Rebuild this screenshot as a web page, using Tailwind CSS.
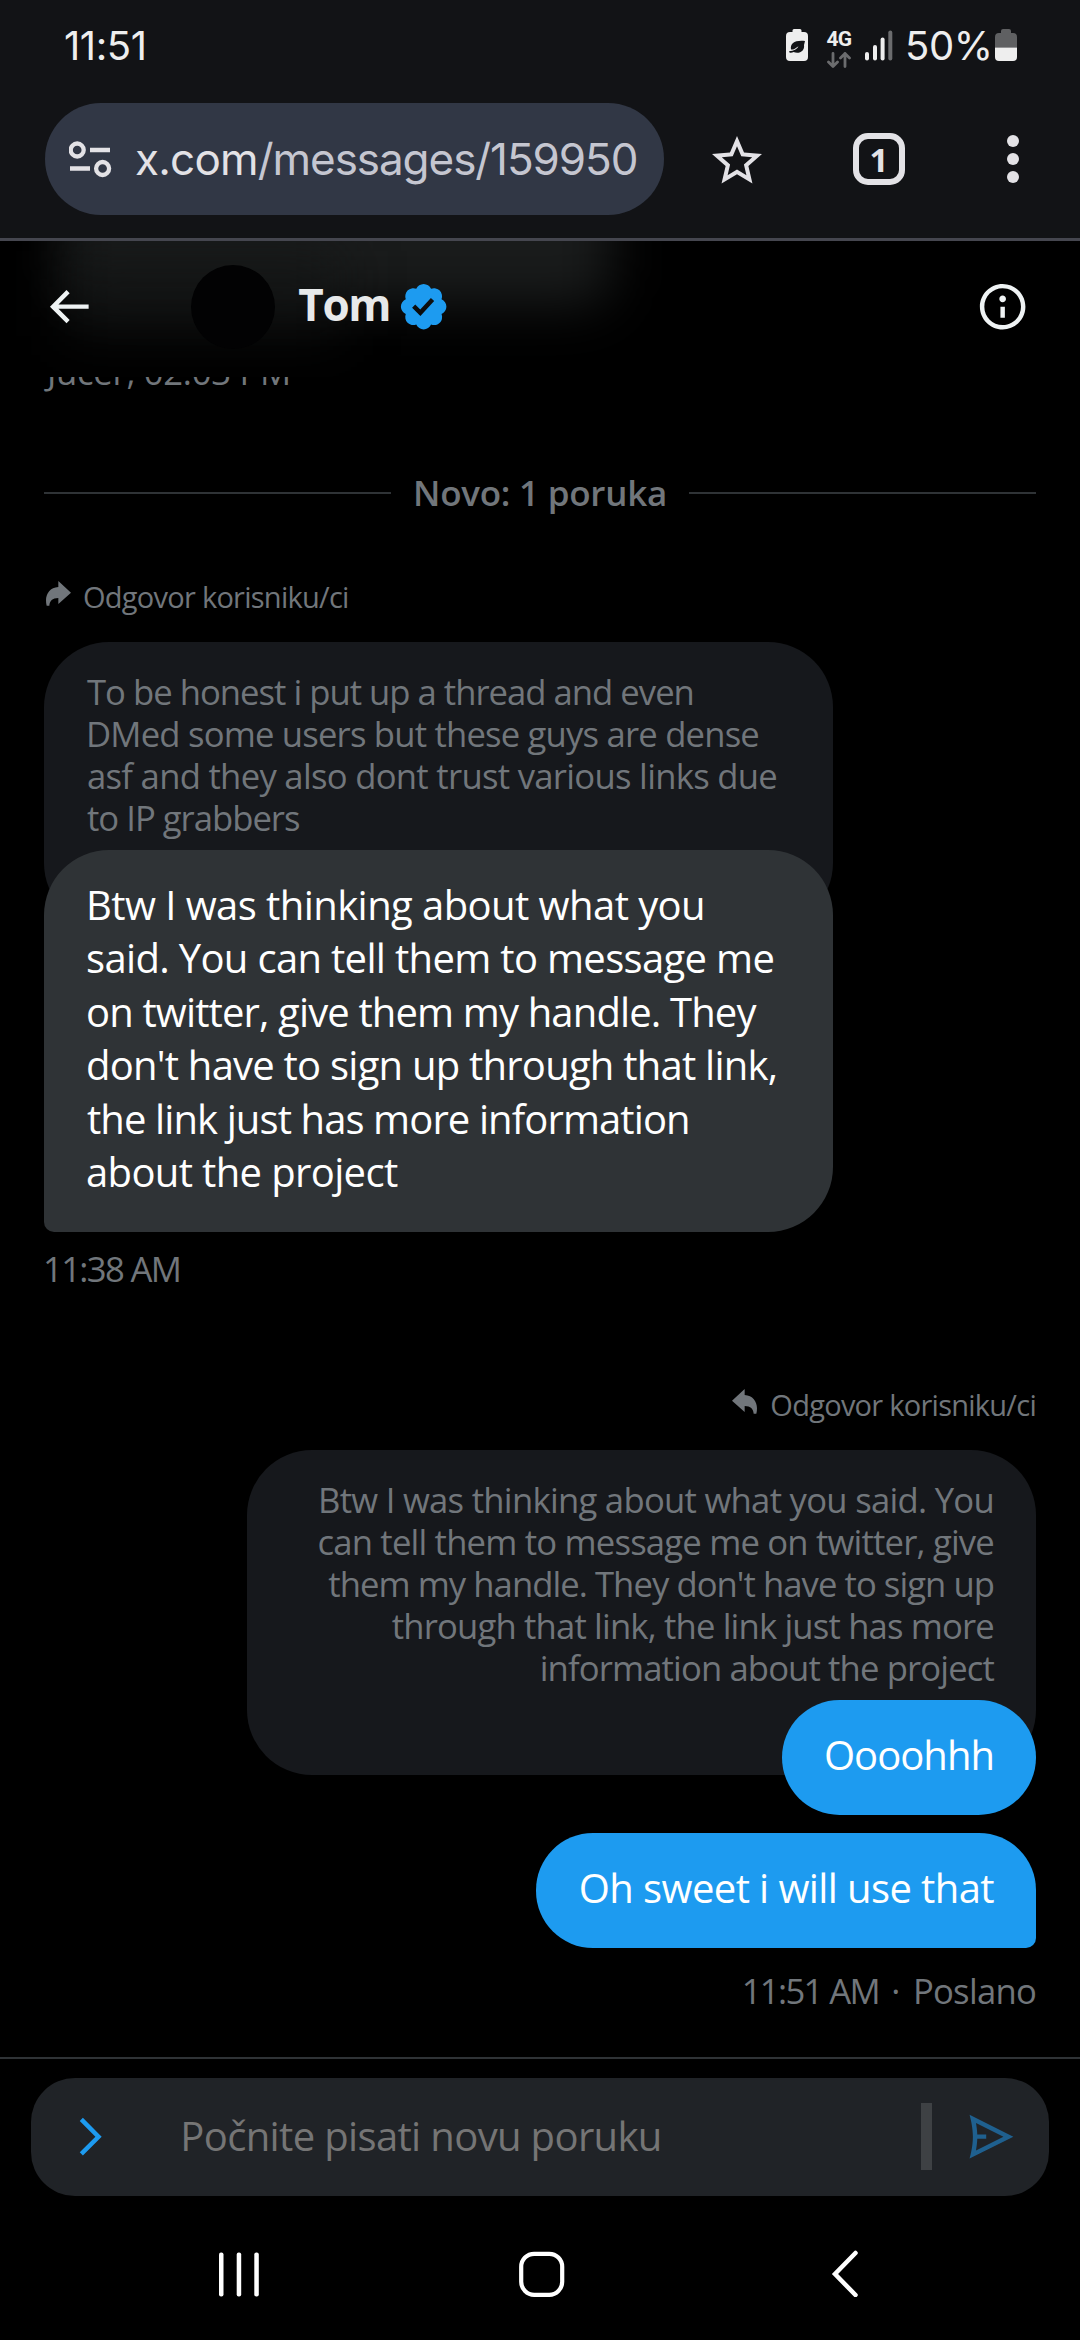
<!DOCTYPE html>
<html lang="hr">
<head>
<meta charset="utf-8">
<title>Tom / X</title>
<script src="https://cdn.jsdelivr.net/npm/@tailwindcss/browser@4"></script>
</head>
<body class="w-[1080px] h-[2340px] bg-black overflow-hidden flex flex-col font-['Open_Sans',sans-serif] text-[#71767b]">

<!-- System status bar and browser toolbar -->
<div class="h-[241px] shrink-0 bg-[#121316] border-b-3 border-[#45464f] font-['Inter',sans-serif]">
  <div class="h-[103px] pl-16 pr-16 pt-[22px] flex items-start justify-between text-[#eeeeee]">
    <span class="text-[40px] leading-[48px] tracking-[-0.4px]">11:51</span>
    <div class="flex items-start">
      <svg class="w-[22px] h-8 mt-[7px]" viewBox="0 0 22 32"><path fill="#eee" d="M6.5 3V1.500Q6.500 0 8 0h6q1.500 0 1.500 1.500V3H18q4 0 4 4v21q0 4-4 4H4q-4 0-4-4V7q0-4 4-4z"/><path fill="#121316" d="M19 12C9 11 4 14 5 20.500 9 21 10 18 12.500 17.500 11 20 8 22 3 22.300L3.500 23.500C5 24 6.500 23.500 7.500 23 13 25.500 19 22 18 16z"/></svg>
      <div class="ml-[17px] mr-px mt-[4px] w-7 flex flex-col items-center">
        <span class="text-[21px] leading-[26px] font-bold tracking-[-0.6px] font-['Roboto',sans-serif]">4G</span>
        <svg class="w-6 h-4" viewBox="0 0 24 16" fill="none" stroke="#6b6c6e" stroke-width="2.800" stroke-linecap="round" stroke-linejoin="round"><path d="M6 1.500v13M1.500 10l4.500 4.500 4.500-4.500M18 14.500v-13M13.500 6 18 1.500 22.500 6"/></svg>
      </div>
      <svg class="w-7 h-8 ml-[11px] mt-[7px]" viewBox="0 0 28 32" fill="#eee"><rect y="23" width="4" height="8.500" rx="2"/><rect x="8" y="16" width="4" height="15.500" rx="2"/><rect x="15.600" y="8.500" width="4" height="23" rx="2"/><rect x="23.300" y="1.500" width="4" height="30" rx="2" fill="#6b6c6e"/></svg>
      <span class="ml-[12px] w-[90px] text-[40px] leading-[48px] tracking-[-0.4px]">50%</span>
      <svg class="w-[22px] h-8 mt-[7px] mr-[-1px]" viewBox="0 0 22 32"><path fill="#5f6062" d="M6 4V2q0-2 2-2h6q2 0 2 2v2h2q4 0 4 4v10.500H0V8q0-4 4-4z"/><path fill="#eee" d="M0 18.500h22V28q0 4-4 4H4q-4 0-4-4z"/></svg>
    </div>
  </div>
  <div class="flex items-center h-28 pl-[45px]">
    <div class="w-[619px] h-28 rounded-full bg-[#313745] flex items-center pl-6 shrink-0">
      <svg class="w-[44px] h-10 shrink-0" viewBox="0 0 44 40" fill="none" stroke="#e3e2e6" stroke-width="4.300"><circle cx="8.200" cy="11" r="6.500"/><path d="M21 11h20M1 29.500h20"/><circle cx="33.600" cy="29.500" r="6.500"/></svg>
      <div class="ml-[22px] w-[506px] overflow-hidden whitespace-nowrap text-[44px] leading-[60px] text-[#c5c6d0]"><span class="text-[#e3e2e6] tracking-[-0.8px]">x.com</span><span class="tracking-[-1.06px]">/messages/159950</span></div>
    </div>
    <svg class="w-[60px] h-[60px] ml-[43px] mt-[3px] shrink-0" viewBox="0 0 24 24" fill="#e3e2e6"><path d="M22 9.240l-7.190-.62L12 2 9.190 8.630 2 9.240l5.460 4.730L5.820 21 12 17.270 18.180 21l-1.630-7.030L22 9.240zM12 15.400l-3.760 2.270 1-4.280-3.320-2.880 4.380-.38L12 6.100l1.710 4.040 4.380.38-3.320 2.880 1 4.280L12 15.400z"/></svg>
    <div class="ml-[86px] size-[52px] rounded-[15px] border-[6px] border-[#e3e2e6] flex items-center justify-center shrink-0 text-[#e3e2e6] font-bold text-[33px] leading-none font-['Open_Sans',sans-serif]">1</div>
    <div class="ml-[102px] flex flex-col gap-[6px]">
      <i class="size-3 rounded-full bg-[#e3e2e6]"></i><i class="size-3 rounded-full bg-[#e3e2e6]"></i><i class="size-3 rounded-full bg-[#e3e2e6]"></i>
    </div>
  </div>
</div>

<!-- Conversation header -->
<header class="relative h-[136px] shrink-0 bg-black overflow-hidden">
  <div class="absolute left-[62px] -top-[140px] w-[550px] h-[205px] rounded-[30px] bg-[#191b1b] blur-[26px]"></div>
  <div class="absolute left-[62px] top-[10px] w-[280px] h-[85px] bg-[#121414]/60 blur-[28px]"></div>
  <div class="relative flex items-center h-[131px] pl-[42px]">
    <svg class="w-[53.3px] h-[53.3px] shrink-0" viewBox="0 0 24 24" fill="#eff3f4"><path d="M7.414 13l5.043 5.040-1.414 1.420L3.586 12l7.457-7.460 1.414 1.420L7.414 11H21v2H7.414z"/></svg>
    <div class="ml-[96px] size-[84px] rounded-full bg-[#020203] shrink-0"></div>
    <h1 class="ml-[23px] w-[99px] text-[44px] leading-[56px] font-bold tracking-[-1.36px] text-[#e7e9ea] -mt-[5px]">Tom</h1>
    <svg class="w-[53.3px] h-[53.3px] shrink-0" viewBox="0 0 22 22" fill="#1d9bf0"><path d="M20.396 11c-.018-.646-.215-1.275-.57-1.816-.354-.54-.852-.972-1.438-1.246.223-.607.27-1.264.14-1.897-.131-.634-.437-1.218-.882-1.687-.47-.445-1.053-.75-1.687-.882-.633-.13-1.290-.083-1.897.14-.273-.587-.704-1.086-1.245-1.440S11.647 1.620 11 1.604c-.646.017-1.273.213-1.813.568s-.969.854-1.240 1.440c-.608-.223-1.267-.272-1.902-.14-.635.13-1.220.436-1.690.882-.445.47-.749 1.055-.878 1.688-.13.633-.08 1.290.144 1.896-.587.274-1.087.705-1.443 1.245-.356.54-.555 1.170-.574 1.817.02.647.218 1.276.574 1.817.356.54.856.972 1.443 1.245-.224.606-.274 1.263-.144 1.896.13.634.433 1.218.877 1.688.47.443 1.054.747 1.687.878.633.132 1.290.084 1.897-.136.274.586.705 1.084 1.246 1.439.54.354 1.170.551 1.816.569.647-.016 1.276-.213 1.817-.567s.972-.854 1.245-1.440c.604.239 1.266.296 1.903.164.636-.132 1.220-.447 1.680-.907.46-.46.776-1.044.908-1.681s.075-1.299-.165-1.903c.586-.274 1.084-.705 1.439-1.246.354-.54.551-1.170.569-1.816zM9.662 14.850l-3.429-3.428 1.293-1.302 2.072 2.072 4.400-4.794 1.347 1.246z"/></svg>
    <svg class="w-[53.3px] h-[53.3px] shrink-0 ml-auto mr-[50.5px]" viewBox="0 0 24 24" fill="#eff3f4"><path d="M13.500 8.500c0 .83-.67 1.500-1.500 1.500s-1.500-.67-1.500-1.500S11.170 7 12 7s1.500.67 1.500 1.500zM13 17v-5h-2v5h2zm-1 5.250c5.660 0 10.250-4.590 10.250-10.250S17.660 1.750 12 1.750 1.750 6.340 1.750 12 6.340 22.250 12 22.250zM20.250 12c0 4.560-3.690 8.250-8.250 8.250S3.750 16.560 3.750 12 7.440 3.750 12 3.750s8.250 3.690 8.250 8.250z"/></svg>
  </div>
</header>

<!-- Messages -->
<main class="h-[1680px] shrink-0 overflow-hidden px-[44px] flex flex-col text-[34.67px] leading-[42px] whitespace-nowrap">
  <div class="-mt-[26px] h-[42px] shrink-0 pl-[3px] tracking-[-0.28px]">Jučer, 02:03 PM</div>

  <div class="mt-[78px] h-[42px] shrink-0 flex items-center gap-[22px]">
    <div class="flex-1 h-[2px] mt-[2px] bg-[#2f3336]"></div>
    <span class="mt-px font-semibold text-[35px] tracking-[-0.25px]">Novo: 1 poruka</span>
    <div class="flex-1 h-[2px] mt-[2px] bg-[#2f3336]"></div>
  </div>

  <!-- Received reply -->
  <div class="mt-[65px] h-[36px] shrink-0 flex items-start text-[29px] leading-[36px] tracking-[-0.74px]">
    <svg class="w-[25px] h-[25px] ml-[2px] mt-[3px] mr-[12px]" viewBox="0 0 75 75" fill="#71767b"><path d="M75 35 37 0v18C13 19 0 38 0 58q0 10 2 16h8C11 60 19 51 37 51v18z"/></svg>
    <span class="mt-px">Odgovor korisniku/ci</span>
  </div>
  <div class="mt-[28px] w-[789px] h-[286px] shrink-0 rounded-[65px] bg-[#16181c] pl-[43px] pt-[29px] flex flex-col">
    <span class="tracking-[-0.99px]">To be honest i put up a thread and even</span>
    <span class="tracking-[-0.81px] -ml-[1px]">DMed some users but these guys are dense</span>
    <span class="tracking-[-0.71px]">asf and they also dont trust various links due</span>
    <span class="tracking-[-1px]">to IP grabbers</span>
  </div>
  <div class="-mt-[78px] w-[789px] h-[382px] shrink-0 relative rounded-[65px] rounded-bl-[10px] bg-[#2f3336] pl-[42px] pt-[28px] flex flex-col text-white text-[40px] leading-[53.400px]">
    <span class="tracking-[-0.57px]">Btw I was thinking about what you</span>
    <span class="tracking-[-0.67px]">said. You can tell them to message me</span>
    <span class="tracking-[-0.86px]">on twitter, give them my handle. They</span>
    <span class="tracking-[-0.77px]">don't have to sign up through that link,</span>
    <span class="tracking-[-0.9px] ml-[1px]">the link just has more information</span>
    <span class="tracking-[-0.64px]">about the project</span>
  </div>
  <div class="mt-[16px] h-[41px] shrink-0 -ml-[1px] tracking-[-1.65px]">11:38 AM</div>

  <!-- Sent reply -->
  <div class="mt-[97px] h-[36px] shrink-0 flex items-start justify-end text-[29px] leading-[36px] tracking-[-0.74px]">
    <svg class="w-[25px] h-[25px] mt-[3px] mr-[13px]" viewBox="0 0 75 75" fill="#71767b"><path d="M0 35 38 0v18C62 19 75 38 75 58q0 10-2 16h-8C64 60 56 51 38 51v18z"/></svg>
    <span class="mt-px">Odgovor korisniku/ci</span>
  </div>
  <div class="mt-[28px] self-end w-[789px] h-[325px] shrink-0 rounded-[65px] bg-[#16181c] pr-[42px] pt-[29px] flex flex-col items-end">
    <span class="tracking-[-0.72px]">Btw I was thinking about what you said. You</span>
    <span class="tracking-[-0.81px]">can tell them to message me on twitter, give</span>
    <span class="tracking-[-0.95px]">them my handle. They don't have to sign up</span>
    <span class="tracking-[-0.84px]">through that link, the link just has more</span>
    <span class="tracking-[-0.87px]">information about the project</span>
  </div>
  <div class="-mt-[75px] self-end relative w-[254px] h-[115px] shrink-0 rounded-full bg-[#1d9bf0] pr-[42px] pt-[28px] text-right text-white text-[40px] leading-[53px] tracking-[-0.98px]">Oooohhh</div>
  <div class="mt-[18px] self-end w-[500px] h-[115px] shrink-0 rounded-[57px] rounded-br-[10px] bg-[#1d9bf0] pr-[42px] pt-[28px] text-right text-white text-[40px] leading-[53px] tracking-[-0.6px]">Oh sweet i will use that</div>
  <div class="mt-[22px] h-[42px] shrink-0 flex justify-end"><span class="tracking-[-1.65px]">11:51 AM</span><span class="w-[34px] text-center">·</span><span class="tracking-[-0.75px]">Poslano</span></div>
</main>

<!-- Composer -->
<footer class="h-[139px] shrink-0 border-t-2 border-[#2f3336] px-[31px] pt-[19px]">
  <div class="h-[118px] rounded-[44px] bg-[#202327] flex items-center pl-[32px]">
    <svg class="w-[53.3px] h-[53.3px] shrink-0" viewBox="0 0 24 24" fill="#1d9bf0"><path d="M14.586 12L7.543 4.960l1.414-1.420L17.414 12l-8.457 8.460-1.414-1.420L14.586 12z"/></svg>
    <span class="ml-[64px] -mt-[3px] w-[741px] text-[40px] leading-[54px] tracking-[-0.64px] text-[#757575] whitespace-nowrap">Počnite pisati novu poruku</span>
    <div class="w-[11px] h-[67px] -mt-[2px] bg-[#3e4144] shrink-0"></div>
    <svg class="w-[53.3px] h-[53.3px] ml-[32px] shrink-0" viewBox="0 0 24 24" fill="#1f608f"><path d="M2.504 21.866l.526-2.108C3.040 19.719 4 15.823 4 12s-.96-7.719-.97-7.757l-.527-2.109L22.236 12 2.504 21.866zM5.981 13c-.072 1.962-.34 3.833-.583 5.183L17.764 12 5.398 5.818c.242 1.349.51 3.221.583 5.183H10v2H5.981z"/></svg>
  </div>
</footer>

<!-- System navigation -->
<nav class="flex-1 flex items-start pt-[53px] pl-[219px]">
  <svg class="w-10 h-12" viewBox="0 0 40 48" fill="#fff"><rect y="3.500" width="4.500" height="44" rx="2"/><rect x="17.700" y="3.500" width="4.500" height="44" rx="2"/><rect x="35.300" y="3.500" width="4.500" height="44" rx="2"/></svg>
  <svg class="w-12 h-12 ml-[258px]" viewBox="0 0 48 48" fill="none" stroke="#fff" stroke-width="4.200"><rect x="4.200" y="4.800" width="41" height="41" rx="13"/></svg>
  <svg class="w-[30px] h-12 ml-[265px]" viewBox="0 0 30 48" fill="none" stroke="#fff" stroke-width="4.500" stroke-linecap="round"><path d="M25.500 4 5 25 25.500 46"/></svg>
</nav>
</body>
</html>
